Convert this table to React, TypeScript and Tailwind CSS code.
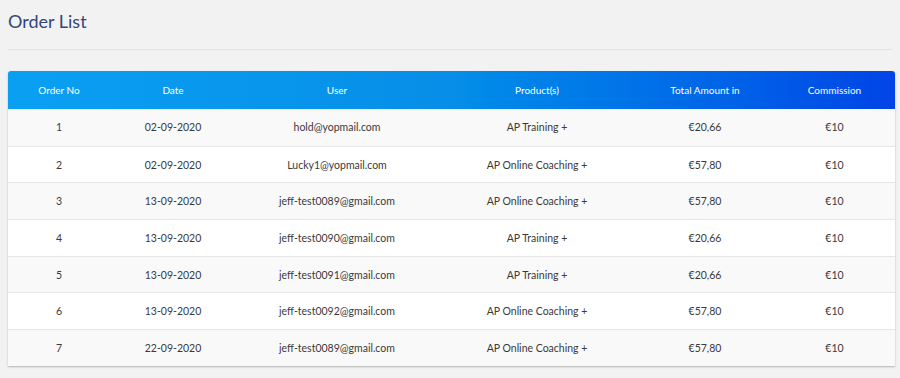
const rows = [
  { no: "1", date: "02-09-2020", user: "hold@yopmail.com", product: "AP Training +", total: "€20,66", commission: "€10" },
  { no: "2", date: "02-09-2020", user: "Lucky1@yopmail.com", product: "AP Online Coaching +", total: "€57,80", commission: "€10" },
  { no: "3", date: "13-09-2020", user: "jeff-test0089@gmail.com", product: "AP Online Coaching +", total: "€57,80", commission: "€10" },
  { no: "4", date: "13-09-2020", user: "jeff-test0090@gmail.com", product: "AP Training +", total: "€20,66", commission: "€10" },
  { no: "5", date: "13-09-2020", user: "jeff-test0091@gmail.com", product: "AP Training +", total: "€20,66", commission: "€10" },
  { no: "6", date: "13-09-2020", user: "jeff-test0092@gmail.com", product: "AP Online Coaching +", total: "€57,80", commission: "€10" },
  { no: "7", date: "22-09-2020", user: "jeff-test0089@gmail.com", product: "AP Online Coaching +", total: "€57,80", commission: "€10" },
];

const cols = "grid grid-cols-[102px_126px_202px_198px_138px_121px]";

export default function App() {
  return (
    <div className="min-h-[378px] bg-[#f2f2f2] px-2 pt-[10px] font-['Lato',sans-serif]">
      <h1 className="text-[18px] leading-[23px] text-[#34467a]">Order List</h1>
      <div className="mt-4 h-px bg-[#e4e4e4]" />
      <div className="mt-[21px] w-[887px] rounded-t-[3px] bg-white shadow-[0_1px_2px_rgba(0,0,0,0.25)]">
        <div className={`${cols} h-[38px] items-center rounded-t-[3px] bg-gradient-to-r from-[#0aa0f2] via-[#078ee8] to-[#0443e6] text-center text-[10px] text-white`}>
          <div>Order No</div>
          <div>Date</div>
          <div>User</div>
          <div>Product(s)</div>
          <div>Total Amount in</div>
          <div>Commission</div>
        </div>
        {rows.map((r, i) => (
          <div
            key={r.no}
            className={`${cols} h-[36.7px] items-center border-t border-[#e6e6e6] pt-[2px] text-center text-[10.5px] text-[#3a3a3a] ${i % 2 === 0 ? "bg-[#f9f9f9]" : "bg-white"} ${i === 0 ? "border-t-0" : ""}`}
          >
            <div>{r.no}</div>
            <div>{r.date}</div>
            <div>{r.user}</div>
            <div>{r.product}</div>
            <div>{r.total}</div>
            <div>{r.commission}</div>
          </div>
        ))}
      </div>
    </div>
  );
}
